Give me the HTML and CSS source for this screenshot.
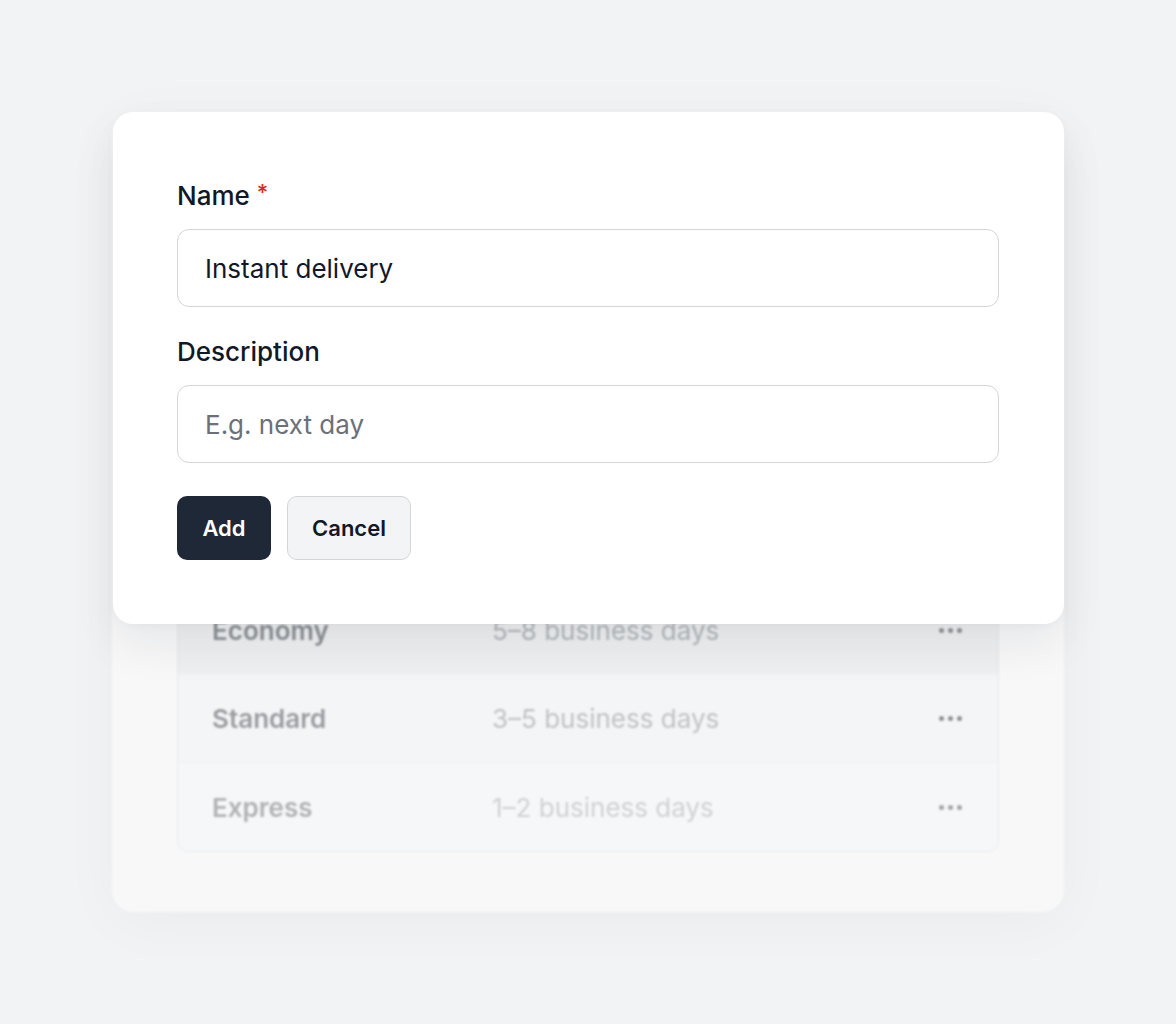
FILE: index.html
```html
<!DOCTYPE html>
<html lang="en">
<head>
<meta charset="utf-8">
<title>Shipping methods</title>
<link rel="stylesheet" href="styles.css">
</head>
<body>
<div class="stage">
  <section class="back-card">
    <div class="back-spacer"></div>
    <div class="table">
      <div class="row row-1">
        <span class="cell-name">Economy</span>
        <span class="cell-desc">5–8 business days</span>
        <span class="dots"><i></i><i></i><i></i></span>
      </div>
      <div class="row row-2">
        <span class="cell-name">Standard</span>
        <span class="cell-desc">3–5 business days</span>
        <span class="dots"><i></i><i></i><i></i></span>
      </div>
      <div class="row row-3">
        <span class="cell-name">Express</span>
        <span class="cell-desc">1–2 business days</span>
        <span class="dots"><i></i><i></i><i></i></span>
      </div>
    </div>
  </section>

  <form class="modal">
    <label class="field-label" for="name">Name<span class="req">*</span></label>
    <input class="field-input" id="name" type="text" value="Instant delivery">
    <label class="field-label second" for="desc">Description</label>
    <input class="field-input" id="desc" type="text" placeholder="E.g. next day">
    <div class="actions">
      <button type="button" class="btn btn-primary">Add</button>
      <button type="button" class="btn btn-secondary">Cancel</button>
    </div>
  </form>
</div>
</body>
</html>
```

FILE: styles.css
```css
* { box-sizing: border-box; }

html, body {
  margin: 0;
  padding: 0;
}

body {
  width: 1176px;
  height: 1024px;
  overflow: hidden;
  background: #f2f3f4;
  font-family: Inter, "Noto Sans", "Liberation Sans", sans-serif;
}

.stage {
  position: relative;
  padding: 112px 112px 0 112px;
}

.back-card {
  width: 952px;
  height: 800px;
  background: #f8f8f9;
  border-radius: 22px;
  box-shadow: 0 10px 60px rgba(0, 0, 0, 0.035);
  padding: 0 65px;
  display: flex;
  flex-direction: column;
  filter: blur(0.8px);
}

.back-spacer {
  height: 475px;
  flex: none;
}

.table {
  border: 1px solid #e8e9eb;
  border-top: none;
  border-radius: 0 0 12px 12px;
  overflow: hidden;
}

.row {
  height: 88px;
  display: flex;
  align-items: center;
  padding: 0 36px 0 34px;
  border-bottom: 1px solid #f0f1f2;
}

.row:last-child { border-bottom: none; }

.row-1 { background: #eeeff1; }
.row-2 { background: #f4f5f6; }
.row-3 { background: #f6f7f8; }

.cell-name {
  width: 280px;
  font-size: 26px;
  font-weight: 600;
  color: #8d9095;
}

.cell-desc {
  flex: 1;
  font-size: 26px;
  font-weight: 400;
  color: #b3b6ba;
}

.row-2 .cell-name { color: #9a9da1; }
.row-2 .cell-desc { color: #c0c2c5; }
.row-3 .cell-name { color: #b0b2b5; }
.row-3 .cell-desc { color: #cfd1d3; }

.dots {
  display: flex;
  gap: 4px;
  align-items: center;
}

.dots i {
  width: 5px;
  height: 5px;
  border-radius: 50%;
  background: #8f9196;
}

.row-3 .dots i { background: #a3a5a9; }

.modal {
  position: absolute;
  left: 113px;
  top: 112px;
  width: 951px;
  height: 512px;
  margin: 0;
  background: #ffffff;
  border-radius: 20px;
  box-shadow: 0 22px 44px rgba(20, 24, 32, 0.07), 0 2px 8px rgba(20, 24, 32, 0.03);
  padding: 68px 65px 64px 64px;
  display: flex;
  flex-direction: column;
}

.field-label {
  display: flex;
  align-items: flex-start;
  height: 32px;
  font-size: 26px;
  line-height: 32px;
  font-weight: 500;
  color: #111827;
  margin-bottom: 17px;
}

.field-label.second { margin-top: 29px; }

.req {
  color: #dc2626;
  font-size: 22px;
  line-height: 24px;
  margin-left: 7px;
}

.field-input {
  display: block;
  width: 100%;
  height: 78px;
  border: 1.5px solid #d3d5d9;
  border-radius: 12px;
  padding: 0 27px;
  font-family: inherit;
  font-size: 26px;
  font-weight: 400;
  color: #111827;
  background: #ffffff;
  outline: none;
}

.field-input::placeholder { color: #6b7079; }

.actions {
  display: flex;
  gap: 16px;
  margin-top: 33px;
}

.btn {
  height: 64px;
  border-radius: 10px;
  font-family: inherit;
  font-size: 22px;
  font-weight: 600;
  padding: 0;
  cursor: pointer;
}

.btn-primary {
  background: #1e2836;
  color: #ffffff;
  border: none;
  width: 94px;
}

.btn-secondary {
  background: #f3f4f6;
  color: #111827;
  border: 1.5px solid #d3d5d9;
  width: 124px;
}
```
